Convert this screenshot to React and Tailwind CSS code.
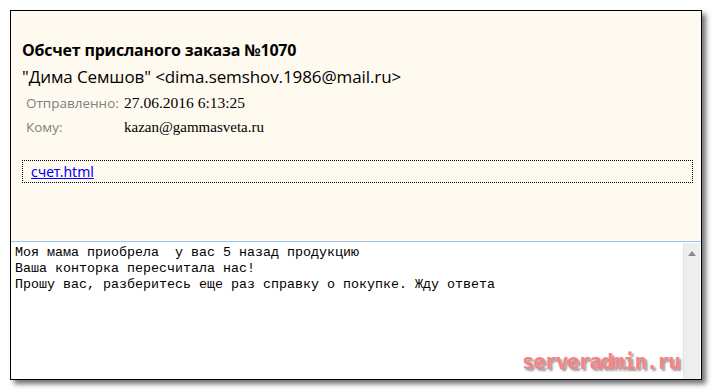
export default function App() {
  const lines = [
    'Моя мама приобрела  у вас 5 назад продукцию',
    'Ваша конторка пересчитала нас!',
    'Прошу вас, разберитесь еще раз справку о покупке. Жду ответа',
  ]

  return (
    <div className="relative w-[713px] h-[391px] bg-white pl-[10px] pt-[10px]">
      <div className="flex flex-col w-[692px] h-[370px] border border-black shadow-[4px_4px_5px_rgba(0,0,0,0.55)]">
        {/* шапка письма */}
        <div className="h-[231px] bg-[#fffaf0] border-b border-[#9dc3f2] pl-[11px] pt-[28px] font-['Open_Sans',sans-serif]">
          <div className="text-[16px] font-bold leading-[22px] text-black tracking-[-0.2px]">
            Обсчет присланого заказа №1070
          </div>
          <div className="mt-[5px] text-[17px] leading-[21px] text-black tracking-[-0.1px]">
            "Дима Семшов" &lt;dima.semshov.1986@mail.ru&gt;
          </div>
          <div className="flex items-baseline mt-[4px] pl-[4px]">
            <span className="w-[98px] text-[13.5px] text-[#808080]">Отправленно:</span>
            <span className="font-['Liberation_Serif',serif] text-[15.5px] text-black">27.06.2016 6:13:25</span>
          </div>
          <div className="flex items-baseline mt-[2px] pl-[4px]">
            <span className="w-[98px] text-[13.5px] text-[#808080]">Кому:</span>
            <span className="font-['Liberation_Serif',serif] text-[15px] text-black">kazan@gammasveta.ru</span>
          </div>
          <div className="mt-[21px] w-[671px] h-[23px] border border-dotted border-black pl-[8px] flex items-center">
            <a href="#" className="text-[14px] text-[#0000ff] underline font-['Noto_Sans',sans-serif]">счет.html</a>
          </div>
        </div>

        {/* текст письма */}
        <div className="flex flex-1 bg-white">
          <div className="flex-1 pl-[4px] pt-[3px] font-['Liberation_Mono',monospace] text-[13.33px] leading-[16px] text-black whitespace-pre">
            {lines.map((l, i) => (
              <div key={i}>{l}</div>
            ))}
          </div>
          <div className="w-[17px] mr-[1px] mt-[1px] bg-[#eeeeee] border-l border-[#e2e2e2] flex justify-center pt-[8px]">
            <svg width="8" height="5" viewBox="0 0 8 5">
              <path d="M0 5 L4 0 L8 5 Z" fill="#8a8a8a" />
            </svg>
          </div>
        </div>
      </div>

      <div className="absolute left-[522px] top-[351px] text-[21px] leading-[22px] font-bold font-['DejaVu_Sans_Mono',monospace] text-[#f38585] tracking-[-1.4px] [text-shadow:2px_2px_2px_rgba(0,0,0,0.4)]">
        serveradmin.ru
      </div>
    </div>
  )
}
